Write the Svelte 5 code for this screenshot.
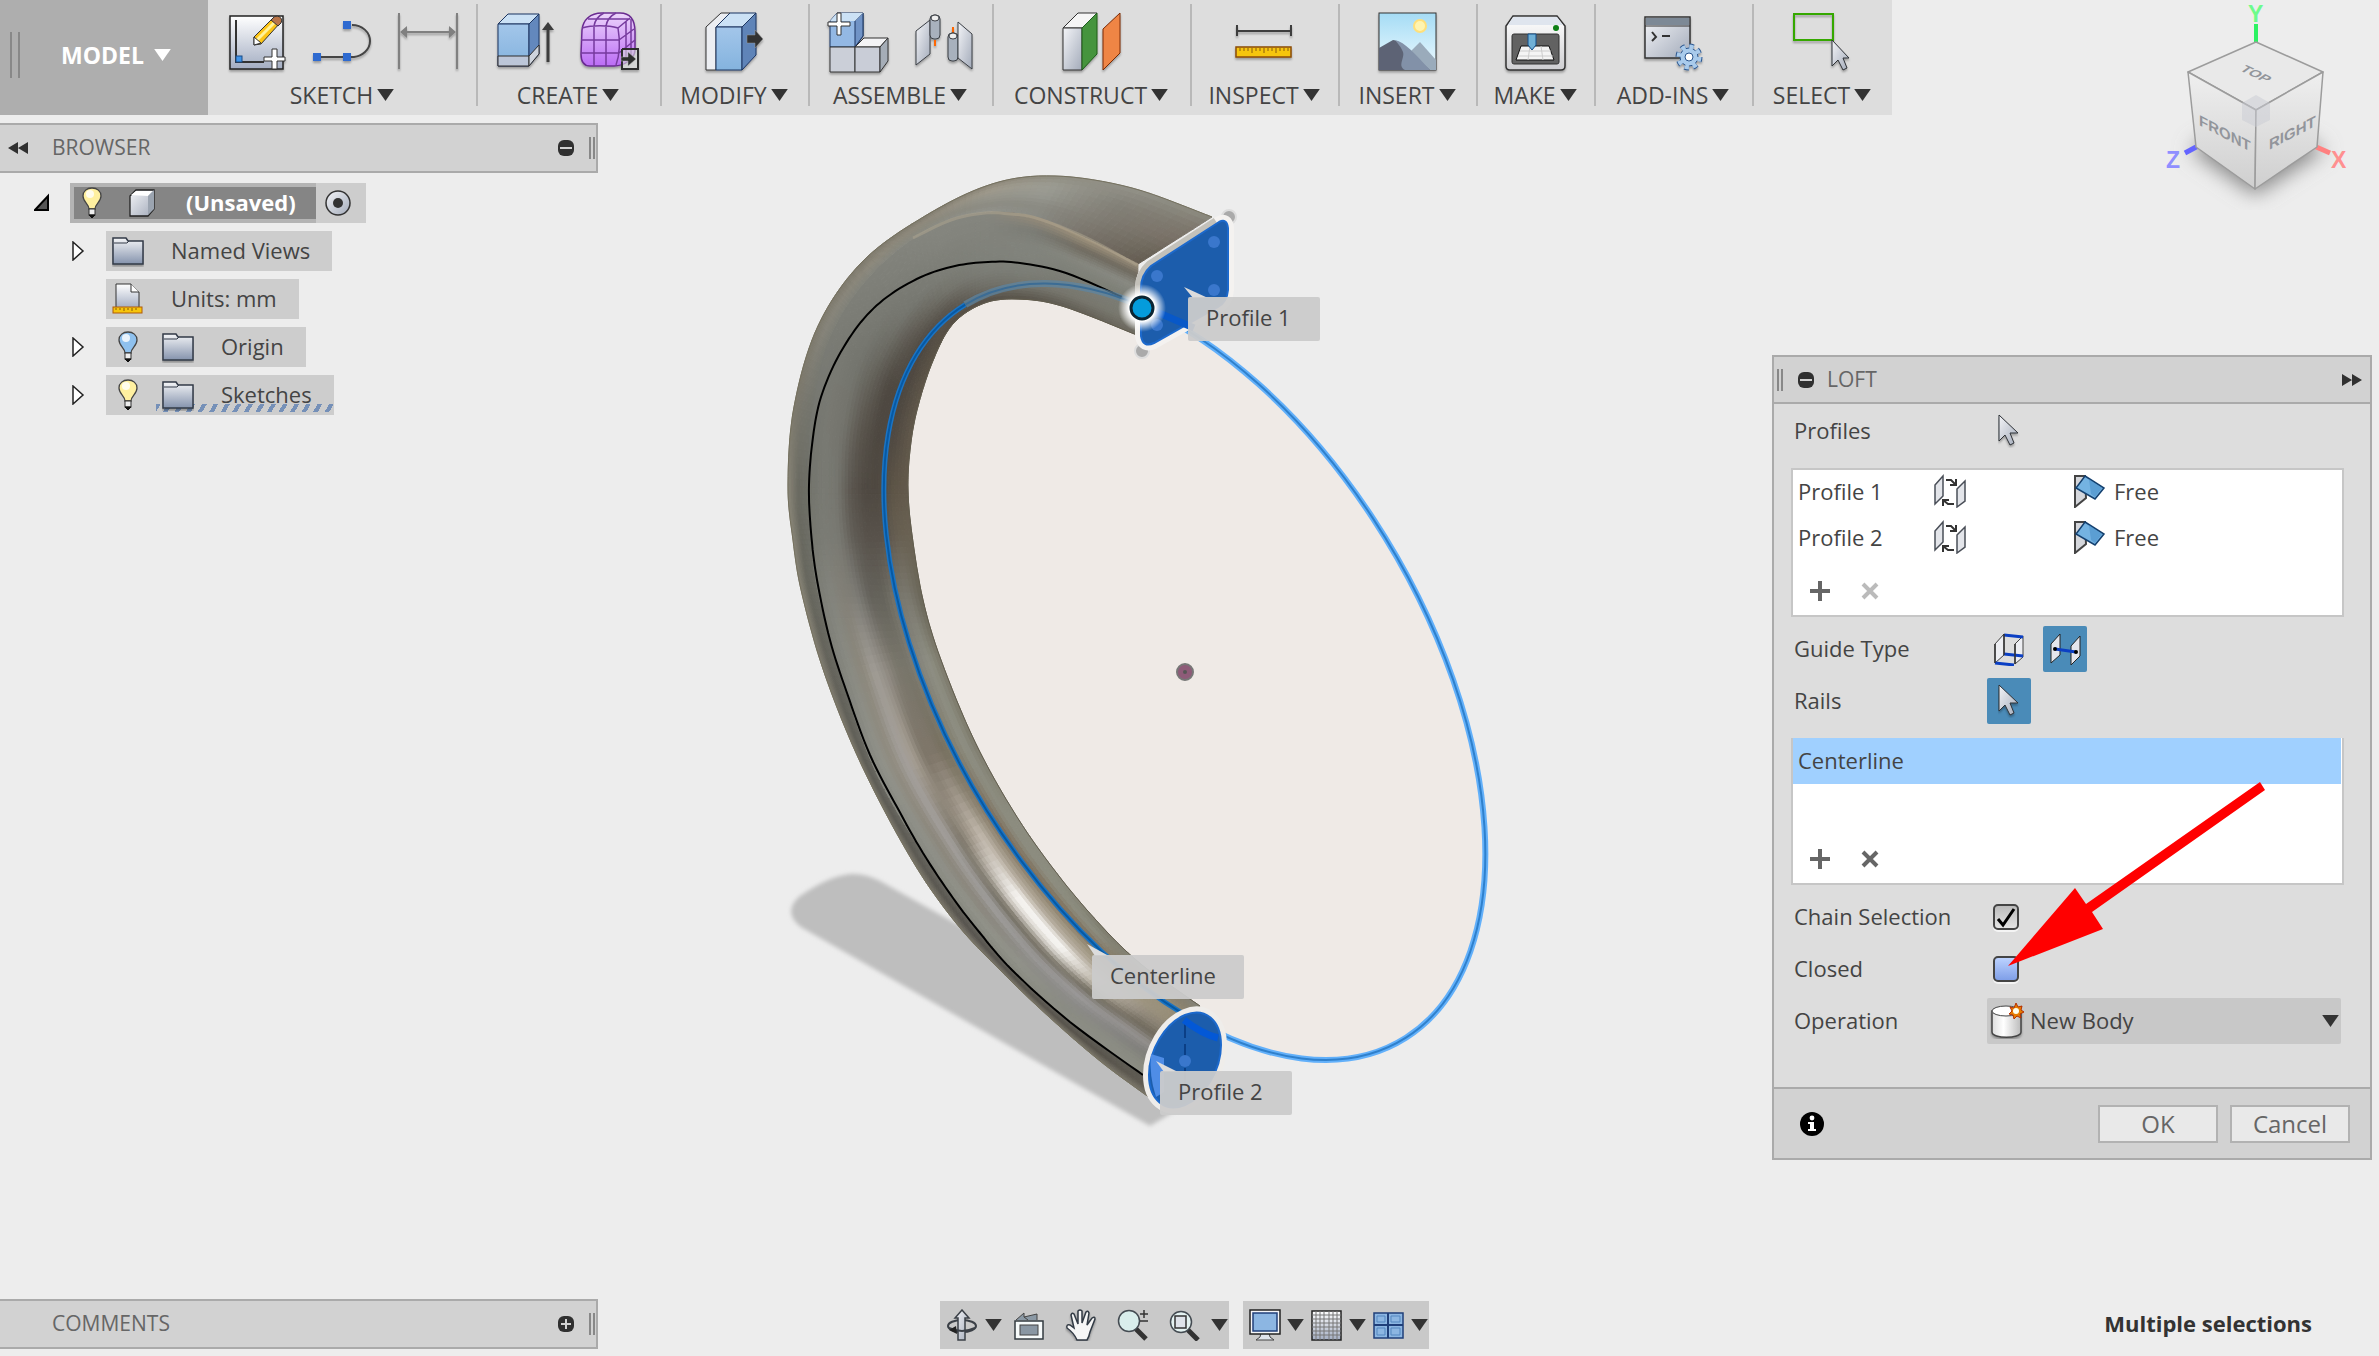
<script>
  const groups = [
    { name: 'SKETCH', icons: ['sketch', 'spline', 'dimension'], width: 268 },
    { name: 'CREATE', icons: ['extrude', 'form'], width: 184 },
    { name: 'MODIFY', icons: ['presspull'], width: 148 },
    { name: 'ASSEMBLE', icons: ['component', 'joint'], width: 184 },
    { name: 'CONSTRUCT', icons: ['plane'], width: 198 },
    { name: 'INSPECT', icons: ['measure'], width: 148 },
    { name: 'INSERT', icons: ['picture'], width: 138 },
    { name: 'MAKE', icons: ['printer'], width: 118 },
    { name: 'ADD-INS', icons: ['scripts'], width: 158 },
    { name: 'SELECT', icons: ['select'], width: 140 }
  ];

  const tree = [
    { name: 'Named Views', icon: 'folder', open: true },
    { name: 'Units: mm', icon: 'units' },
    { name: 'Origin', icon: 'folder', bulb: '#8fc1ee', open: true },
    { name: 'Sketches', icon: 'folder', bulb: '#fff0a0', open: true, hatch: true }
  ];

  const profiles = ['Profile 1', 'Profile 2'];
  let chain = $state(true);
  let closed = $state(false);
  let operation = $state('New Body');

  // Cross sections of the swept body: outer edge, middle edge, inner edge,
  // then the shades from outer to middle and from middle to inner.
  const sections = [
    [[1212, 217], [1138, 264], [1137, 335], '8a887d 7d776c 786f65 6b6458 625a4f', 'a0937f 6e695e 8a8b84 7e8077 7b7c74 79796f 6e6b61'],
    [[1132, 188], [1085, 238], [1062, 306], '929188 838178 7f7b72 777168', 'a3967f 706b60 85867e 7e8078 7a7b73 77766d 605c53'],
    [[1055, 176], [1035, 217], [1016, 299], '8f8d80 9c9c93 979890 8b8b83 8a8b84', '978c7a 7b7c75 81837c 81837c 7c7e77 74746c 585349'],
    [[992, 184], [985, 213], [982, 304], '8c8678 9f9a8c 95948a 8c8b82 93948d', '84857e 83847d 81827b 7f817a 7b7c75 6f6e66 554e45'],
    [[925, 216], [934, 227], [952, 325], '7d796c 8f897c 8b897d 8b8c84', '85867f 83847d 7f8079 7c7d76 74746c 5d5850 544d42'],
    [[862, 262], [875, 272], [932, 363], '7d796c 8b877a 84857d', '80817a 7d7e77 797a73 74756e 615d55 4d4740 5b5346'],
    [[818, 326], [832, 335], [917, 410], '7d796c 86847a 7d7e76', '7b7c75 787972 74756e 66645c 4f4942 4d4740 60574a'],
    [[794, 407], [812, 413], [910, 450], '7d796c 77766d 73746c', '757670 787972 73736c 5b564e 4d4740 514a42 62594b'],
    [[788, 485], [809, 488], [908, 490], '8a8678 6a6a61 6e6f67', '72736b 797a73 76766f 5b564f 4f4942 4f4941 5e5547 62594b'],
    [[793, 540], [811, 540], [912, 535], '8a8678 68685f 6e6f67', '76776f 7b7c75 797972 605c55 57514a 57514a 675f51 6a6253'],
    [[802, 594], [819, 596], [923, 600], '8a8678 66665d 6c6c64', '7b7c74 83847d 827f76 7d7c76 64625b 65635b 78766c 7c7a70 6a6658'],
    [[825, 675], [842, 678], [941, 660], '837f72 63625a 6a6a62', '80817a 8b8c84 8b877b a19d96 918c84 7a776c 77756a 83827a 8f9084 7d7a6b'],
    [[862, 766], [876, 772], [975, 742], '7d796c 5e5d56 696861', '85867e 91928a 908b7f a39f9b a49c90 7d7568 7f7669 77705f 837f6f 8f9084 7d7a6b'],
    [[912, 860], [926, 858], [1017, 817], '7d796c 5b5952 67665f', '87887f 8f9088 8b867b a4a19e 7b7568 a39a8d c2b9ad 9a9180 7c6c58 8c8c7f 8c8c7f'],
    [[956, 923], [968, 916], [1062, 880], '7d796c 57544e 67655e', '87887f 92938a 88847a a3a2a1 706b5e d8d3cc fffefc b9b0a2 998f7c 7d6b55 8e8f82 8a8a7c'],
    [[1000, 970], [1010, 966], [1107, 932], '7d796c 57544e 65635c', '87887f 92938a 8c8b86 9c9a99 726d60 d9d5ce fffffd b6ad9f 9e9580 7c6b56 8e8f82 7c7a6b'],
    [[1048, 1016], [1056, 1010], [1142, 965], '7d796c 57534b 65635c', '8c8d84 8a8b83 8c8b88 9c9a9a 6f6a5d b5ad9f b9b1a5 a1977f 998f78 7f735f 87877a'],
    [[1100, 1061], [1102, 1046], [1177, 990], '7d796c 57534b 605e56', '8c8d84 8b8c83 848380 969391 6f695c 8f877a 9a917e 9a917b 8d836f 7f7a6c'],
    [[1150, 1098], [1146, 1077], [1200, 1006], '7d796c 605c53 5c5951', '8c8d84 88897f 7b7b76 918e8a 6e685b 7f7768 918770 948a72 87806d 85857a']
  ];

  const hex = (h) => [0, 2, 4].map((k) => parseInt(h.slice(k, k + 2), 16));
  const mix = (a, b, t) => a.map((v, k) => v + (b[k] - v) * t);
  function shade(list, t) {
    const c = list.split(' ').map(hex);
    const p = t * (c.length - 1);
    const i = Math.min(Math.floor(p), c.length - 2);
    return mix(c[i], c[i + 1], p - i);
  }
  function spline(p0, p1, p2, p3, t) {
    return p1.map((v, k) =>
      0.5 * (2 * v + (p2[k] - p0[k]) * t + (2 * p0[k] - 5 * v + 4 * p2[k] - p3[k]) * t * t + (3 * v - p0[k] - 3 * p2[k] + p3[k]) * t * t * t)
    );
  }
  function along(points, s) {
    const last = points.length - 1;
    const i = Math.min(Math.floor(s), last - 1);
    const at = (k) => points[Math.max(0, Math.min(last, k))];
    return spline(at(i - 1), at(i), at(i + 1), at(i + 2), s - i);
  }
  function curve(points, steps = 8) {
    const out = [];
    for (let k = 0; k <= (points.length - 1) * steps; k++) {
      out.push(along(points, k / steps).map((v) => v.toFixed(1)).join(' '));
    }
    return 'M' + out.join('L');
  }

  const ACROSS_A = 12;
  const ACROSS_B = 30;
  const STEPS = 10;
  const edges = [0, 1, 2].map((k) => sections.map((s) => s[k]));
  const rows = [];
  for (let n = 0; n <= (sections.length - 1) * STEPS; n++) {
    const s = n / STEPS;
    const [o, m, i] = edges.map((e) => along(e, s));
    const a = Math.min(Math.floor(s), sections.length - 2);
    const row = [];
    for (let j = 0; j <= ACROSS_A; j++) {
      const f = j / ACROSS_A;
      row.push({ p: mix(o, m, f), c: mix(shade(sections[a][3], f), shade(sections[a + 1][3], f), s - a) });
    }
    for (let j = 0; j <= ACROSS_B; j++) {
      const f = j / ACROSS_B;
      row.push({ p: mix(m, i, f), c: mix(shade(sections[a][4], f), shade(sections[a + 1][4], f), s - a) });
    }
    rows.push(row);
  }
  const facets = [];
  for (let n = 0; n < rows.length - 1; n++) {
    for (let j = 0; j < rows[n].length - 1; j++) {
      const q = [rows[n][j], rows[n][j + 1], rows[n + 1][j + 1], rows[n + 1][j]];
      const c = mix(mix(q[0].c, q[1].c, 0.5), mix(q[2].c, q[3].c, 0.5), 0.5);
      facets.push({
        d: 'M' + q.map((v) => v.p.map((x) => x.toFixed(1)).join(' ')).join('L') + 'Z',
        fill: 'rgb(' + c.map(Math.round).join(',') + ')'
      });
    }
  }
  const outerEdge = curve(edges[0]);
  const innerEdge = curve(edges[2]);
  const seam = curve([[1122, 297], [1066, 273], [1020, 263], [988, 262], [955, 266], [921, 277], [887, 297], [861, 322], [838, 357], [821, 397], [813, 437], [809, 485], [811, 532], [817, 580], [830, 640], [847, 693], [870, 755], [897, 807], [923, 853], [953, 898], [980, 933], [1012, 970], [1070, 1022], [1143, 1075]]);
  const crest = curve([[1137, 265], [1085, 237], [1036, 218], [1010, 214], [985, 213], [951, 220], [913, 238]]);

  const tags = [
    { text: 'Profile 1', x: 1188, y: 297, w: 132, tx: 1206, tip: '1184,287 1208,298 1193,298' },
    { text: 'Centerline', x: 1092, y: 955, w: 152, tx: 1110, tip: '1087,944 1109,956 1095,956' },
    { text: 'Profile 2', x: 1160, y: 1071, w: 132, tx: 1178, tip: '1156,1061 1178,1072 1164,1072' }
  ];
</script>

{#snippet caret()}
  <svg class="caret" viewBox="0 0 18 13" aria-hidden="true"><path d="M0 0H18L9 13Z" fill="currentColor" /></svg>
{/snippet}

{#snippet pointer()}
  <path d="M1 1V27L7 21L12 31L16 29L12 19H20Z" fill="url(#steel)" stroke="#2d3136" stroke-width="1" filter="url(#drop)" />
{/snippet}

{#snippet tool(kind)}
  <svg class="tool" viewBox="0 0 60 62" aria-hidden="true">
    <g filter="url(#drop)">
      {#if kind === 'sketch'}
        <rect x="2" y="4" width="53" height="53" fill="url(#paper)" stroke="#222" stroke-width="1.5" />
        <path d="M8 8V50H36" fill="none" stroke="#333" stroke-width="2" />
        <rect x="8" y="44" width="6" height="6" fill="#3f93e8" stroke="#1a4b86" />
        <path d="M26 25L45 6L52 11L33 32L26 33Z" fill="#fcc419" stroke="#333" />
        <path d="M29 28L48 9" stroke="#fff29a" stroke-width="3" />
        <path d="M45 6C48 2 56 5 53 11L50 14L43 8Z" fill="#b9744a" stroke="#333" />
        <path d="M26 25L33 31L26 33Z" fill="#fff" stroke="#333" />
        <path d="M44 37H49V45H57V49H49V57H44V49H36V45H44Z" fill="#fff" stroke="#333" />
      {:else if kind === 'spline'}
        <path d="M6 45H42C50 44 58 38 58 29C58 20 50 13 40 13" fill="none" stroke="#444" stroke-width="2" />
        <rect x="1" y="41" width="8" height="8" fill="#2f6bd0" /><rect x="31" y="41" width="8" height="8" fill="#2f6bd0" /><rect x="31" y="9" width="8" height="8" fill="#2f6bd0" />
      {:else if kind === 'dimension'}
        <path d="M3 1V57M61 1V57M5 20H59" fill="none" stroke="#808080" stroke-width="2" />
        <path d="M4 20L11 14V26ZM60 20L53 14V26Z" fill="#808080" />
      {:else if kind === 'extrude'}
        <path d="M2 12L12 2H43L33 12Z" fill="#cbe1f5" stroke="#1d3461" />
        <path d="M2 12H33V54H2Z" fill="url(#sky)" stroke="#1d3461" />
        <path d="M33 12L43 2V42L33 54Z" fill="#6488bd" stroke="#1d3461" />
        <path d="M2 44H33V54H2Z" fill="#bcc6d8" stroke="#2d2d2d" />
        <path d="M33 44L43 33V42L33 54Z" fill="#cfd4dd" stroke="#2d2d2d" />
        <path d="M52 50V14" stroke="#3c3c3c" stroke-width="3" /><path d="M46 18L52 10L58 18Z" fill="#3c3c3c" />
      {:else if kind === 'form'}
        <path d="M2 18C3 8 10 1 22 1H40C50 1 55 8 55 20V38C55 46 45 54 34 54H10C4 54 1 50 1 42Z" fill="url(#violet)" stroke="#6a2c91" stroke-width="1.5" />
        <path d="M2 16C12 13 28 13 38 16C40 28 40 42 36 53M1 28H39M1 41H39M14 14V54M26 14V54M14 14C15 8 18 4 24 1M26 14C27 8 30 4 36 1M8 7H50M38 16L50 6M39 28L54 17M39 41L55 28M46 9V49M51 7V44" fill="none" stroke="#763a9e" stroke-width="1.5" />
        <path d="M42 37H58V57H42V37" fill="#ddd" fill-opacity=".6" stroke="#2d2d2d" stroke-width="2" />
        <path d="M41 45H48V40L56 47L48 54V49H41Z" fill="#2d2d2d" stroke="#bbb" stroke-width=".5" />
      {:else if kind === 'presspull'}
        <path d="M2 15L17 1H26L12 15V58H2Z" fill="#eceef2" stroke="#333" />
        <path d="M12 15L26 1H52L38 15Z" fill="#cbe1f5" stroke="#1d3461" />
        <path d="M12 15H38V58H12Z" fill="url(#sky)" stroke="#1d3461" />
        <path d="M38 15L52 1V43L38 58Z" fill="#5e84b8" stroke="#1d3461" />
        <path d="M43 23H51V18L59 27L51 36V31H43Z" fill="#333" stroke="#999" stroke-width=".5" />
      {:else if kind === 'component'}
        <path d="M2 9L9 1H35V24L27 35H2Z" fill="#93b8e4" stroke="#1d3461" /><path d="M27 9L35 1V24L27 35Z" fill="#6f93c6" stroke="#1d3461" /><path d="M2 9L9 1H35L27 9Z" fill="#cbe1f5" />
        <path d="M2 35H27V60H2Z" fill="#cbcfd8" stroke="#333" /><path d="M27 35L36 26H60L52 35Z" fill="#f3f3f5" stroke="#333" />
        <path d="M27 35H52V60H27Z" fill="#c9cdd7" stroke="#333" /><path d="M52 35L60 26V49L52 60Z" fill="#a5adb7" stroke="#333" />
        <path d="M9 1H13V10H22V14H13V23H9V14H0V10H9Z" fill="#fff" stroke="#333" />
      {:else if kind === 'joint'}
        <path d="M4 19L18 8V42L4 53Z" fill="url(#steel)" stroke="#3b3f45" />
        <rect x="18" y="3" width="10" height="24" rx="4" fill="#a8b1bd" stroke="#3b3f45" /><ellipse cx="23" cy="6" rx="4" ry="3" fill="#eee" stroke="#3b3f45" />
        <path d="M23 28V34M41 15V25" stroke="#f60" stroke-width="2" />
        <rect x="36" y="21" width="10" height="28" rx="4" fill="#a8b1bd" stroke="#3b3f45" /><ellipse cx="41" cy="24" rx="4" ry="3" fill="#eee" stroke="#3b3f45" />
        <path d="M46 10L60 22V57L46 46Z" fill="url(#steel)" stroke="#3b3f45" />
      {:else if kind === 'plane'}
        <path d="M2 16L17 1H36L21 16Z" fill="#f5f5f5" stroke="#333" /><path d="M2 16H21V58H2Z" fill="url(#steel)" stroke="#333" />
        <path d="M21 16L36 1V42L21 58Z" fill="#45943c" stroke="#1e5c1b" /><path d="M42 17L59 1V41L42 58Z" fill="#ef8544" stroke="#7a2b06" />
      {:else if kind === 'measure'}
        <path d="M3 19H57M3 13V24M57 13V24" stroke="#3c3c3c" stroke-width="2" />
        <rect x="2" y="35" width="55" height="10" fill="#f6c50c" stroke="#8a4b08" stroke-width="1.5" />
        <path d="M6 36v3M10 36v3M14 36v3M18 36v5M22 36v3M26 36v3M30 36v5M34 36v3M38 36v3M42 36v5M46 36v3M50 36v3M54 36v3" stroke="#8a5a08" />
      {:else if kind === 'picture'}
        <rect x="2" y="1" width="57" height="57" fill="url(#air)" stroke="#333" />
        <circle cx="43" cy="14" r="6" fill="#fff4b0" stroke="#ffe07a" stroke-width="2" />
        <path d="M27 46L43 30L59 48V58H30Z" fill="#9aabbb" />
        <path d="M2 36L16 28C20 28 28 33 32 39L53 58H2Z" fill="#5d6474" /><path d="M18 28C28 30 38 42 53 58H28C20 54 28 46 26 40C24 35 22 33 18 28Z" fill="#8291a8" />
      {:else if kind === 'printer'}
        <path d="M8 4H52L60 14V54Q60 58 56 58H5Q1 58 1 54V14Z" fill="url(#paper2)" stroke="#333" stroke-width="1.5" />
        <path d="M8 5H52L58 13H3Z" fill="#dfe5ee" /><circle cx="51" cy="16" r="3" fill="#0a7f14" />
        <rect x="7" y="22" width="47" height="30" rx="2" fill="#626262" stroke="#333" /><path d="M16 34H44L49 48H11Z" fill="#f4f4f4" stroke="#111" />
        <path d="M15 39H46M13 44H48M25 34L23 48M36 34L38 48" stroke="#ccc" /><path d="M23 22H31V33L27 38L23 33Z" fill="#6fb0d6" stroke="#134f8a" />
      {:else if kind === 'scripts'}
        <rect x="2" y="5" width="45" height="41" fill="url(#steel)" stroke="#333" stroke-width="1.5" /><rect x="3" y="6" width="43" height="7" fill="#7d8996" /><path d="M2 14H47" stroke="#333" />
        <path d="M9 20L13 25L9 29M19 24H27" fill="none" stroke="#333" stroke-width="2" />
        <circle cx="46" cy="45" r="10" fill="none" stroke="#2b568e" stroke-width="7" stroke-dasharray="4 3.85" />
        <circle cx="46" cy="45" r="9" fill="#a9cbec" stroke="#2b568e" /><circle cx="46" cy="45" r="10" fill="none" stroke="#a9cbec" stroke-width="5" stroke-dasharray="4 3.85" />
        <circle cx="46" cy="45" r="4" fill="#fff" stroke="#2b568e" />
      {:else if kind === 'select'}
        <rect x="2" y="2" width="39" height="26" fill="none" stroke="#34a800" stroke-width="2" /><g transform="translate(39 27)"><path d="M1 1V27L7 21L12 31L16 29L12 19H18Z" fill="url(#steel)" stroke="#2d3136" /></g>
      {/if}
    </g>
  </svg>
{/snippet}

{#snippet bulb(color)}
  <svg class="icon bulb" viewBox="0 0 20 32" aria-hidden="true">
    <path d="M7 22C7 17 1 15 1 9C1 4 5 1 10 1S19 4 19 9C19 15 13 17 13 22Z" fill={color} stroke="#444" stroke-width="1.3" />
    <ellipse cx="8" cy="7" rx="4" ry="4" fill="#fff" opacity=".8" /><rect x="7" y="22" width="6" height="6" fill="#eee" stroke="#333" /><path d="M7 28H13L10 31Z" fill="#111" stroke="#111" />
  </svg>
{/snippet}

{#snippet node(kind)}
  <svg class="icon" viewBox="0 0 32 32" aria-hidden="true">
    {#if kind === 'folder'}
      <path d="M2 3H14L16 6H31V29H1V3Z" fill="url(#folder)" stroke="#333b48" stroke-width="1.5" filter="url(#drop)" /><path d="M2 8H15L17 6" fill="none" stroke="#333b48" />
    {:else if kind === 'units'}
      <path d="M4 1H19L27 9V25H4Z" fill="url(#paper)" stroke="#333" /><path d="M19 1V9H27" fill="#fff" stroke="#333" />
      <rect x="1" y="24" width="29" height="6" fill="#f6c50c" stroke="#b05a08" /><path d="M4 25v2M8 25v2M12 25v3M16 25v2M20 25v3M24 25v2" stroke="#8a5a08" />
    {:else}
      <path d="M4 9L10 3H28V22L22 29H4Z" fill="url(#steel)" stroke="#222" stroke-width="1.3" /><path d="M5 8L10 4H27L22 9Z" fill="#fff" /><path d="M22 9L28 3V22L22 28Z" fill="#9ba4b0" />
    {/if}
  </svg>
{/snippet}

{#snippet knob(plus)}
  <svg class="knob" viewBox="0 0 16 16" aria-hidden="true"><rect width="16" height="16" rx="6" fill="#303030" /><path d={plus ? 'M3 8H13M8 3V13' : 'M2 8H14'} stroke="#d2d2d2" stroke-width="2" /></svg>
{/snippet}

{#snippet listTools(off)}
  <div class="list-tools">
    <button type="button" aria-label="Add"><svg viewBox="0 0 20 20"><path d="M10 0V20M0 10H20" stroke="#666" stroke-width="4" /></svg></button>
    <button type="button" aria-label="Remove" disabled={off}><svg viewBox="0 0 20 20"><path d="M3 3L17 17M17 3L3 17" stroke={off ? '#bbb' : '#666'} stroke-width="4" /></svg></button>
  </div>
{/snippet}

<svg class="defs" aria-hidden="true">
  <defs>
    <linearGradient id="steel" x2="1" y2="1"><stop stop-color="#f4f5f8" /><stop offset="1" stop-color="#a3abba" /></linearGradient>
    <linearGradient id="paper" x2="0" y2="1"><stop stop-color="#fff" /><stop offset="1" stop-color="#a3adc2" /></linearGradient>
    <linearGradient id="paper2" x2="0" y2="1"><stop stop-color="#fff" /><stop offset="1" stop-color="#cfcfd2" /></linearGradient>
    <linearGradient id="folder" x2="0" y2="1"><stop stop-color="#f4f5f7" /><stop offset="1" stop-color="#8593ad" /></linearGradient>
    <linearGradient id="sky" x2="0" y2="1"><stop stop-color="#a3c6ea" /><stop offset="1" stop-color="#84b3de" /></linearGradient>
    <linearGradient id="air" x2="0" y2="1"><stop stop-color="#a5dcf5" /><stop offset="1" stop-color="#eefaff" /></linearGradient>
    <linearGradient id="violet" x2="0" y2="1"><stop stop-color="#ecd5fb" /><stop offset="1" stop-color="#bb6cf5" /></linearGradient>
    <linearGradient id="tube"><stop stop-color="#ddd" /><stop offset=".4" stop-color="#fff" /><stop offset="1" stop-color="#bbb" /></linearGradient>
    <linearGradient id="face" x2="0" y2="1"><stop stop-color="#efefef" /><stop offset="1" stop-color="#cfcfcf" /></linearGradient>
    <radialGradient id="halo"><stop offset=".55" stop-color="#fff" /><stop offset="1" stop-color="#fff" stop-opacity="0" /></radialGradient>
    <filter id="drop" x="-20%" y="-20%" width="150%" height="150%"><feDropShadow dx="0" dy="2" stdDeviation="1" flood-opacity=".3" /></filter>
    <filter id="soft"><feGaussianBlur stdDeviation="2" /></filter>
    <filter id="haze" x="-30%" y="-30%" width="160%" height="160%"><feGaussianBlur stdDeviation="10" /></filter>
  </defs>
</svg>

<div class="app">
  <svg class="scene" viewBox="0 0 2379 1356" role="img" aria-label="Lofted ring segment">
    <path d="M794 920Q786 908 800 896Q832 874 854 874Q866 874 880 881L1200 1060L1180 1108L1150 1126L806 930Q798 926 794 920Z" fill="#bebebe" filter="url(#soft)" />
    <g transform="matrix(301 182 0 343 1185 672)"><circle r="1" fill="#efeae6" /></g>
    <g>{#each facets as f}<path d={f.d} fill={f.fill} stroke={f.fill} stroke-width="1" />{/each}</g>
    <path d={crest} fill="none" stroke="#b0a590" stroke-width="3" opacity=".5" />
    <path d={outerEdge} fill="none" stroke="#75715f" stroke-width="1" />
    <path d={innerEdge} fill="none" stroke="#625d4e" stroke-width="1" />
    <path d={seam} fill="none" stroke="#000" stroke-width="2" />
    <g transform="matrix(301 182 0 343 1185 672)" fill="none">
      <path d="M-.143 -.99A1 1 0 1 1 .007 1" class="ring far" /><path d="M-.143 -.99A1 1 0 1 1 .007 1" class="ring core" />
      <path d="M-.73 -.684A1 1 0 0 0 .007 1" class="ring near" /><path d="M-.73 -.684A1 1 0 0 0 .007 1" class="ring core dark" />
      <path d="M-.143 -.99A1 1 0 0 0 -.73 -.684" class="ring veil" /><path d="M-.143 -.99A1 1 0 0 0 -.73 -.684" class="ring core faint" />
    </g>
    <circle cx="1185" cy="672" r="8" fill="#8e5b78" stroke="#777" stroke-width="2" /><circle cx="1185" cy="672" r="2" fill="#555" />

    <g fill="#aaa" stroke="#ddd" stroke-width="2"><circle cx="1229" cy="217" r="7" /><circle cx="1142" cy="351" r="7" /></g>
    <path d="M1219 222Q1227 218 1228 228V290Q1227 302 1218 307L1154 343Q1143 348 1141 336V288Q1141 275 1151 266Z" fill="#1c5dac" stroke="#f4f2f0" stroke-width="12" />
    <path d="M1141 300V288Q1141 275 1151 266L1217 223" fill="none" stroke="#c3c1ba" stroke-width="12" />
    <path d="M1219 222Q1227 218 1228 228V290Q1227 302 1218 307L1154 343Q1143 348 1141 336V288Q1141 275 1151 266Z" fill="#1c5dac" stroke="#1c69cc" stroke-width="2" />
    <g fill="#3a77cc"><circle cx="1214" cy="242" r="6" /><circle cx="1157" cy="276" r="6" /><circle cx="1214" cy="290" r="6" /><circle cx="1157" cy="325" r="6" /></g>
    <path d="M1152 310L1194 328" stroke="#0858c8" stroke-width="7" />
    <circle cx="1142" cy="308" r="24" fill="url(#halo)" /><circle cx="1142" cy="308" r="11" fill="#049cdc" stroke="#0b2533" stroke-width="3" />

    <g transform="matrix(36 -15 0 45 1185 1060)"><circle r="1" class="cap rim" /><circle r="1" class="cap" /></g>
    <path d="M1151 1054Q1149 1076 1156 1097L1164 1092V1058Z" fill="#4f8de6" />
    <path d="M1185 1020V1094" stroke="#0b3f86" stroke-width="2" stroke-dasharray="18 6" /><path d="M1184 1020Q1202 1034 1218 1038" fill="none" stroke="#0358d6" stroke-width="7" /><circle cx="1185" cy="1061" r="6" fill="#3a77cc" />

    {#each tags as t}
      <polygon points={t.tip} fill="#dcdcdc" /><rect x={t.x} y={t.y} width={t.w} height="44" rx="2" fill="#cbcbcb" opacity=".95" />
      <text x={t.tx} y={t.y + 29} class="tag">{t.text}</text>
    {/each}
  </svg>

  <svg class="cube" viewBox="0 0 220 210" role="img" aria-label="View cube">
    <path d="M50 150L115 195L185 150L150 130H80Z" fill="#888" filter="url(#haze)" />
    <path d="M116 24V42" stroke="#2bf262" stroke-width="4" /><path d="M45 153L58 146" stroke="#6464ff" stroke-width="5" /><path d="M174 146L190 153" stroke="#ff8080" stroke-width="5" />
    <g stroke="#9c9c9c" stroke-width="1.5" stroke-linejoin="round"><path d="M116 42L183 72L116 110L48 72Z" fill="#e9e9e9" /><path d="M48 72L116 110L115 189L56 147Z" fill="url(#face)" /><path d="M183 72L116 110L115 189L177 147Z" fill="url(#face)" /></g>
    <path d="M116 95L130 103V120L116 127L102 120V103Z" fill="#c9ccd4" opacity=".5" />
    <g class="face-name">
      <g transform="matrix(1 .52 0 1 59 125)"><text>FRONT</text></g>
      <g transform="matrix(1 -.52 0 1 129 150)"><text>RIGHT</text></g>
      <g transform="matrix(.88 .42 -.7 .5 99 70)"><text>TOP</text></g>
    </g>
    <text x="108" y="22" class="axis" fill="#6dfb8b">Y</text><text x="26" y="168" class="axis" fill="#8f8fff">Z</text><text x="191" y="168" class="axis" fill="#ff9090">X</text>
  </svg>

  <header class="toolbar">
    <button class="workspace"><span class="grip"></span>MODEL {@render caret()}</button>
    {#each groups as g}
      <button class="group" style:width="{g.width}px">
        <span class="tools">{#each g.icons as i}{@render tool(i)}{/each}</span>
        <span class="group-name">{g.name} {@render caret()}</span>
      </button>
    {/each}
  </header>

  <main>
    <aside class="left">
      <section class="bar">
        <button aria-label="Collapse"><svg class="chev" viewBox="0 0 20 12"><path d="M10 0V12L0 6ZM20 0V12L10 6Z" fill="#303030" /></svg></button>
        <h2>BROWSER</h2>
        <button aria-label="Minimize browser">{@render knob(false)}</button><span class="grip small"></span>
      </section>
      <ul class="tree">
        <li class="root">
          <svg class="twist" viewBox="0 0 16 16"><path d="M1 15H14V1Z" fill="#555" stroke="#000" stroke-width="2" /></svg>
          <span class="root-chip">{@render bulb('#fff0a0')}{@render node('cube')}<b>(Unsaved)</b></span>
          <span class="activate"><svg viewBox="0 0 28 28"><circle cx="14" cy="14" r="12" fill="url(#steel)" stroke="#333" stroke-width="1.5" /><circle cx="14" cy="14" r="5" fill="#333" /></svg></span>
        </li>
        {#each tree as t}
          <li>
            <svg class="twist" viewBox="0 0 16 20">{#if t.open}<path d="M3 1L13 10L3 19Z" fill="#fff" stroke="#222" stroke-width="1.5" />{/if}</svg>
            <span class="chip" class:hatch={t.hatch}>
              {#if t.bulb}{@render bulb(t.bulb)}{/if}{@render node(t.icon)}<span class="node-name">{t.name}</span>
            </span>
          </li>
        {/each}
      </ul>
      <section class="bar comments">
        <h2>COMMENTS</h2><button aria-label="Open comments">{@render knob(true)}</button><span class="grip small"></span>
      </section>
    </aside>

    <nav class="viewbar">
      <div>
        <button class="first" aria-label="Orbit"><svg viewBox="0 0 32 32"><ellipse cx="16" cy="17" rx="14" ry="6" fill="none" stroke="#3b4047" stroke-width="2" /><path d="M12 31V9H9L16 1L23 9H19V31Z" fill="url(#steel)" stroke="#3b4047" stroke-width="1.5" /><path d="M3 19Q16 25 29 19" fill="none" stroke="#3b4047" stroke-width="2" /><path d="M10 17L3 21L11 25Z" fill="#222" /></svg></button>
        <button class="drop" aria-label="Orbit options">{@render caret()}</button>
        <button aria-label="Look at"><svg viewBox="0 0 32 32"><path d="M3 11L11 4V8L24 5V11M11 8L15 11" fill="#8b99a5" stroke="#444" /><rect x="2" y="12" width="28" height="18" fill="#f7fbfb" stroke="#333b40" stroke-width="1.5" /><rect x="7" y="16" width="18" height="10" fill="#8a97a3" stroke="#444" /></svg></button>
        <button aria-label="Pan"><svg viewBox="0 0 32 32"><path d="M12 31Q9 24 2 19Q1 15 5 16L9 19L6 6Q7 3 9 5L13 15L13 2Q15 0 17 2L17 14L21 3Q23 1 24 4L22 16L27 9Q30 7 30 10L25 23Q24 28 22 31Z" fill="#f6f6f6" stroke="#333b45" stroke-width="1.5" filter="url(#drop)" /></svg></button>
        <button aria-label="Zoom"><svg viewBox="0 0 32 32"><path d="M19 20L29 30" stroke="#333" stroke-width="5" /><circle cx="12" cy="12" r="10.5" fill="#d9eeec" stroke="#444b52" stroke-width="1.5" /><path d="M27 1V9M23 5H31M23 12H31" stroke="#333" stroke-width="1.5" /></svg></button>
        <button aria-label="Fit"><svg viewBox="0 0 32 32"><path d="M19 21L29 31" stroke="#333" stroke-width="5" /><circle cx="12" cy="13" r="10.5" fill="#e4f2f1" stroke="#444b52" stroke-width="1.5" /><rect x="6" y="7" width="11" height="12" fill="#dfe3ea" stroke="#333" stroke-width="1.5" /></svg></button>
        <button class="drop" aria-label="Fit options">{@render caret()}</button>
      </div>
      <div class="display">
        <button aria-label="Display"><svg viewBox="0 0 32 32"><path d="M12 24H20L21 28L25 31H7L11 28Z" fill="#dfe3ec" stroke="#444" /><rect x="1" y="1" width="30" height="24" fill="#f4f5f8" stroke="#222" stroke-width="1.5" /><rect x="4" y="4" width="24" height="18" fill="#8cb6e2" stroke="#1f3f7a" stroke-width="1.5" /></svg></button>
        <button class="drop" aria-label="Display options">{@render caret()}</button>
        <button aria-label="Grid"><svg viewBox="0 0 32 32"><rect x="1" y="2" width="29" height="29" fill="url(#paper)" stroke="#222" stroke-width="1.5" /><path d="M5 2V31M9 2V31M13 2V31M18 2V31M22 2V31M26 2V31M1 6H30M1 10H30M1 14H30M1 18H30M1 22H30M1 26H30" stroke="#777" stroke-width="1" /></svg></button>
        <button class="drop" aria-label="Grid options">{@render caret()}</button>
        <button aria-label="Viewports"><svg viewBox="0 0 32 32"><rect x="1" y="4" width="29" height="25" fill="#8cb6e2" stroke="#1f3f7a" stroke-width="1.5" /><path d="M15 4V29M1 16H30" stroke="#1f3f7a" stroke-width="2" /><path d="M4 7H12V13H4ZM18 7H27V13H18ZM4 19H12V26H4ZM18 19H27V26H18Z" fill="none" stroke="#5487c0" /></svg></button>
        <button class="drop" aria-label="Viewport options">{@render caret()}</button>
      </div>
    </nav>

    <aside class="right">
      <form class="loft" onsubmit={(e) => e.preventDefault()}>
        <div class="loft-head"><span class="grip small"></span><button type="button" aria-label="Minimize dialog">{@render knob(false)}</button><h2>LOFT</h2>
          <button type="button" aria-label="Dock"><svg class="chev" viewBox="0 0 20 12"><path d="M0 0V12L10 6ZM10 0V12L20 6Z" fill="#303030" /></svg></button></div>
        <div class="loft-body">
          <div class="row"><span>Profiles</span><button type="button" class="pick" aria-label="Select profiles"><svg viewBox="0 0 22 34">{@render pointer()}</svg></button></div>
          <div class="list">
            <table><tbody>
              {#each profiles as p}
                <tr>
                  <td class="name">{p}</td>
                  <td class="flip"><svg viewBox="0 0 34 34" aria-label="Flip"><path d="M2 11L10 2V22L2 30ZM24 15L32 7V27L24 33Z" fill="#e3e5ea" stroke="#4a4f58" stroke-width="1.5" /><path d="M13 6H18L23 11M23 5V11H17M21 30H15L10 26M10 32V26H16" fill="none" stroke="#333" stroke-width="2" /></svg></td>
                  <td><span class="cond"><svg viewBox="0 0 32 34" aria-hidden="true"><path d="M2 2H12L13 24L2 33Z" fill="#d5d7dc" stroke="#444" stroke-width="2" /><path d="M12 2L31 14L22 25L3 14Z" fill="#74b3e2" stroke="#14406f" stroke-width="1.5" /><path d="M16 5L29 14L22 23L18 20Z" fill="#4b8fc9" opacity=".6" /></svg>Free</span></td>
                </tr>
              {/each}
            </tbody></table>
            {@render listTools(true)}
          </div>
          <div class="row"><span>Guide Type</span>
            <button type="button" class="pick" aria-label="Rails guide"><svg viewBox="0 0 32 34"><path d="M2 12L11 2V23L2 31ZM22 12L30 4V25L22 32Z" fill="#edeef2" stroke="#444" /><path d="M11 3L30 5M2 31L21 33M11 22L30 24" stroke="#0b3fc4" stroke-width="3" /><path d="M11 2V23M22 12V32M2 12V31" stroke="#333" stroke-width="1.5" /></svg></button>
            <button type="button" class="pick on" aria-label="Centerline guide"><svg viewBox="0 0 32 34"><path d="M2 12L11 2V23L2 31ZM22 14L31 4V24L22 33Z" fill="#e4e6ed" stroke="#222" /><path d="M6 17L27 20" stroke="#0b3fc4" stroke-width="3" /><circle cx="6" cy="17" r="2" /><circle cx="27" cy="20" r="2" /></svg></button>
          </div>
          <div class="row"><span>Rails</span><button type="button" class="pick on" aria-label="Select rails"><svg viewBox="0 0 22 34">{@render pointer()}</svg></button></div>
          <div class="list rails"><div class="picked">Centerline</div>{@render listTools(false)}</div>
          <div class="row"><label for="chain">Chain Selection</label><span class="tick"><input id="chain" type="checkbox" bind:checked={chain} />{#if chain}<svg viewBox="0 0 26 26"><path d="M5 15L10 21L21 5" fill="none" stroke="#000" stroke-width="3" /></svg>{/if}</span></div>
          <div class="row"><label for="closed">Closed</label><span class="tick hot"><input id="closed" type="checkbox" bind:checked={closed} /></span></div>
          <div class="row"><label for="operation">Operation</label>
            <span class="combo">
              <svg class="body-icon" viewBox="0 0 34 36" aria-hidden="true"><path d="M2 8V29C2 36 31 36 31 29V8Z" fill="url(#tube)" stroke="#444" stroke-width="1.5" filter="url(#drop)" /><ellipse cx="16" cy="8" rx="14" ry="5" fill="#fff" stroke="#444" /><path d="M26 0L28 4L32 3L31 7L34 9L30 11L31 15L27 13L24 16L23 12L19 11L22 8L20 4L24 5Z" fill="#e67d00" stroke="#b42f00" /><circle cx="26" cy="8" r="3" fill="#ffe" /></svg>
              <select id="operation" bind:value={operation}><option>New Body</option><option>Join</option><option>Cut</option></select>
              <span class="combo-caret">{@render caret()}</span>
            </span>
          </div>
        </div>
        <div class="loft-foot">
          <svg class="info" viewBox="0 0 24 24" role="img" aria-label="Info"><circle cx="12" cy="12" r="12" /><circle cx="12" cy="6" r="2.4" fill="#fff" /><path d="M8 10H14V17H16V19H8V17H10V12H8Z" fill="#fff" /></svg>
          <button type="submit" class="cta">OK</button><button type="button" class="cta">Cancel</button>
        </div>
        <svg class="arrow" viewBox="0 0 270 200" aria-hidden="true"><path d="M8 191L75 113L86 129L260 7L265 15L92 137L103 154Z" fill="#f00" /></svg>
      </form>
      <p class="status">Multiple selections</p>
    </aside>
  </main>
</div>

<style>
  :global(body) { background: #ededed; }
  .app { position: relative; min-height: 100vh; display: flex; flex-direction: column; font: 22px/28px "Open Sans", "Noto Sans", sans-serif; color: #444; overflow: hidden; }
  .defs { position: absolute; width: 0; height: 0; }
  button { border: 0; padding: 0; background: none; font: inherit; color: inherit; }
  h2 { margin: 0; padding-bottom: 2px; font-size: 21px; font-weight: 400; color: #666; }
  svg { display: block; flex: none; }
  .scene { position: absolute; inset: 0; width: 100%; height: 100%; }
  .ring { vector-effect: non-scaling-stroke; fill: none; }
  .far { stroke: #62b0fa; stroke-width: 6px; }
  .core { stroke: #2f80cc; stroke-width: 2px; }
  .near { stroke: #1b74c4; stroke-width: 5px; }
  .dark { stroke: #0759a3; }
  .veil { stroke: #5c86a5; stroke-width: 7px; opacity: .7; }
  .faint { stroke: #3c6c94; }
  .cap { fill: #1c5dac; stroke: #1c69cc; stroke-width: 2px; vector-effect: non-scaling-stroke; }
  .rim { stroke: #efedea; stroke-width: 12px; }
  .tag { font-size: 22px; fill: #444; }
  .cube { position: absolute; top: 0; right: 19px; width: 220px; height: 210px; }
  .face-name { font: bold 15px "Liberation Sans", sans-serif; fill: #92959b; }
  .axis { font: bold 23px "Liberation Sans", sans-serif; }
  .caret { display: inline-block; width: 17px; height: 12px; color: #333; }

  .toolbar { position: relative; display: flex; align-self: flex-start; height: 115px; background: #ddd; }
  .workspace { width: 208px; display: flex; align-items: center; gap: 10px; background: #aeaeae; color: #fff; font-weight: 700; font-size: 23px; padding: 0 0 5px 10px; }
  .workspace .caret { color: #fff; }
  .workspace :global(.caret) { color: #fff; }
  .grip { width: 6px; height: 46px; border: solid #888; border-width: 0 2px; margin-right: 31px; }
  .grip.small { width: 2px; height: 22px; margin: 0; }
  .group { position: relative; display: flex; flex-direction: column; align-items: center; padding-top: 12px; }
  .group + .group { background: linear-gradient(#b8b8b8, #b8b8b8) 0 4px / 2px 102px no-repeat; }
  .tools { display: flex; gap: 24px; height: 68px; }
  .tool { width: 60px; height: 62px; overflow: visible; }
  .group-name { display: flex; align-items: center; gap: 4px; font-size: 23px; line-height: 30px; white-space: nowrap; }

  main { position: relative; flex: 1; display: grid; grid-template-columns: 598px 1fr 607px; }
  .left { display: flex; flex-direction: column; padding: 8px 0 7px; }
  .bar { display: flex; align-items: center; height: 50px; box-sizing: border-box; border: 2px solid #aaa; border-left: 0; background: #d2d2d2; padding: 0 1px 0 8px; }
  .bar h2 { flex: 1; margin-left: 24px; }
  .comments h2 { margin-left: 44px; }
  .bar .small { margin-left: 15px; }
  .comments { margin-top: auto; }
  .chev { width: 20px; height: 12px; }
  .knob { width: 16px; height: 16px; }
  .tree { list-style: none; margin: 10px 0 0; padding: 0; display: flex; flex-direction: column; gap: 8px; }
  .tree li { display: flex; align-items: center; height: 40px; padding-left: 70px; }
  .tree .root { padding-left: 34px; }
  .twist { width: 16px; height: 20px; margin-right: 20px; }
  .chip { display: flex; align-items: center; height: 40px; box-sizing: border-box; background: #cdcdcd; padding: 0 22px 0 6px; }
  .icon { width: 32px; height: 32px; }
  .icon.bulb { width: 20px; margin: 0 24px 0 6px; }
  .node-name { margin-left: 27px; padding-bottom: 2px; }
  .hatch { background: repeating-linear-gradient(120deg, #7590b8 0 4px, transparent 4px 10px) 50px 29px / 177px 8px no-repeat #cdcdcd; }
  .root-chip { display: flex; align-items: center; height: 40px; box-sizing: border-box; border: solid #b4b4b4; border-width: 4px 0 4px 4px; background: #858585; color: #fff; padding-right: 20px; }
  .root-chip .bulb, .root-chip :global(.bulb) { margin: 0 24px 0 8px; }
  .root-chip b { margin-left: 28px; padding-bottom: 2px; }
  .activate { display: flex; align-items: center; height: 40px; width: 50px; background: #cdcdcd; }
  .activate svg { width: 28px; margin-left: 8px; }

  .viewbar { display: flex; align-items: flex-end; justify-content: center; gap: 14px; padding: 0 2px 7px 0; }
  .viewbar div { display: flex; height: 48px; background: #c9c9c9; }
  .viewbar button { width: 52px; display: flex; align-items: center; justify-content: center; }
  .viewbar svg { width: 32px; height: 32px; }
  .viewbar .first { width: 45px; }
  .viewbar .display button { width: 44px; }
  .viewbar .drop, .viewbar .display .drop { width: 18px; }
  .viewbar :global(.drop .caret) { width: 17px; height: 12px; }

  .right { display: flex; flex-direction: column; padding: 240px 7px 16px 0; }
  .loft { position: relative; border: 2px solid #aaa; background: #ddd; }
  .loft-head { display: flex; align-items: center; height: 45px; border-bottom: 2px solid #aaa; background: #d2d2d2; padding: 0 8px 0 3px; }
  .loft-head .knob, .loft-head :global(.knob) { margin: 0 13px 0 15px; }
  .loft-head h2 { flex: 1; }
  .loft-body { padding: 4px 26px 43px 17px; display: flex; flex-direction: column; gap: 6px; }
  .row { display: flex; align-items: center; height: 46px; padding: 0 3px 0 3px; }
  .row > :first-child { width: 193px; padding-bottom: 2px; }
  .pick { width: 44px; height: 46px; border-radius: 2px; display: flex; align-items: center; justify-content: center; }
  .pick + .pick { margin-left: 12px; }
  .pick.on { background: #4a8bb8; }
  .pick svg { height: 34px; }
  .list { box-sizing: border-box; min-height: 149px; margin: 8px 0 3px; border: 2px solid #c6c6c6; background: #fff; display: flex; flex-direction: column; }
  .rails { min-height: 147px; border-top-width: 0; }
  .list table { border-collapse: collapse; width: 100%; }
  .list td { height: 42px; padding: 0 0 4px; }
  .list .name { width: 135px; padding-left: 5px; }
  .list .flip { width: 140px; }
  .flip svg { width: 34px; height: 34px; }
  .cond { display: flex; align-items: center; gap: 9px; }
  .cond svg { width: 32px; height: 34px; }
  .picked { height: 46px; line-height: 44px; padding-left: 5px; margin-right: 1px; background: #a0d0ff; }
  .list-tools { display: flex; gap: 30px; margin: auto 0 14px 17px; }
  .list-tools svg { width: 20px; height: 20px; }
  .tick { display: grid; margin-left: 6px; }
  .tick > * { grid-area: 1 / 1; }
  .tick input { appearance: none; box-sizing: border-box; width: 26px; height: 26px; margin: 0; border: 2px solid #444; border-radius: 5px; background: linear-gradient(#bbb, #e4e4e4); box-shadow: 0 2px 0 #f4f4f4; }
  .tick svg { width: 26px; height: 26px; pointer-events: none; }
  .tick.hot input { background: linear-gradient(#bcd2ff, #7f9fe8); }
  .combo { flex: 1; display: grid; height: 46px; align-items: center; background: #c8c8c8; border-radius: 2px; }
  .combo > * { grid-area: 1 / 1; }
  .body-icon { width: 34px; height: 36px; margin-left: 3px; }
  .combo select { appearance: none; width: 100%; height: 46px; border: 0; background: none; font: inherit; color: inherit; padding: 0 24px 2px 43px; }
  .combo-caret { justify-self: end; display: flex; padding-right: 2px; pointer-events: none; }
  .loft-foot { display: flex; align-items: center; gap: 12px; height: 69px; border-top: 2px solid #aaa; background: #d2d2d2; padding: 0 20px 0 26px; }
  .info { width: 24px; height: 24px; margin-right: auto; }
  .cta { width: 120px; height: 38px; box-sizing: border-box; border: 2px solid #b2b2b2; background: #e9e9e9; color: #666; font-size: 24px; line-height: 30px; }
  .arrow { position: absolute; left: 226px; top: 418px; width: 270px; height: 200px; pointer-events: none; }
  .status { margin: auto 60px 2px auto; font-weight: 700; color: #333; line-height: 30px; }
</style>
